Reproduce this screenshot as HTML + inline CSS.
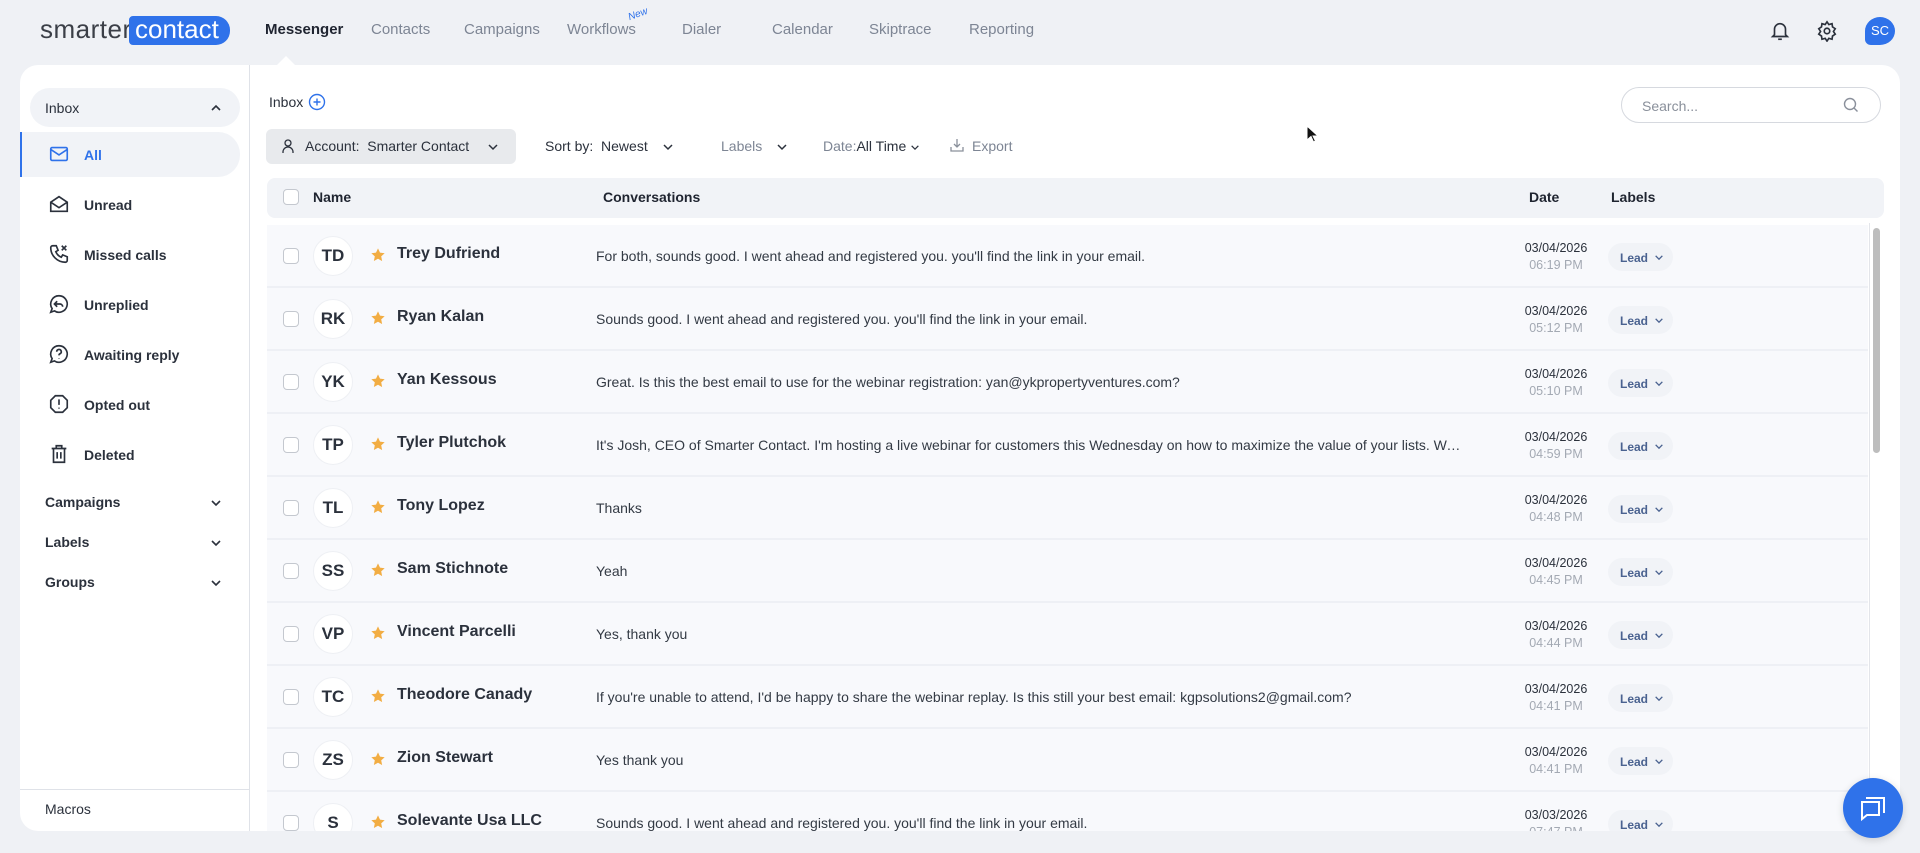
<!DOCTYPE html>
<html><head><meta charset="utf-8"><style>
*{box-sizing:border-box;margin:0;padding:0}
body{width:1920px;height:853px;background:#eff1f5;font-family:"Liberation Sans",Arial,sans-serif;position:relative;overflow:hidden;color:#1f2430}
.abs{position:absolute}
.nav{position:absolute;top:21px;font-size:15px;color:#7d8594}
.panel{position:absolute;left:20px;top:65px;width:1880px;height:766px;background:#fff;border-radius:18px;overflow:hidden}
.side{position:absolute;left:0;top:0;width:230px;height:766px;border-right:1px solid #dfe2e8}
.si{position:absolute;left:64px;font-size:14px;font-weight:bold;color:#2b313c}
.sic{position:absolute;left:28px;width:22px;height:22px}
.sh{position:absolute;left:25px;font-size:14px;font-weight:bold;color:#2b313c}
.chev{position:absolute;left:190px;width:12px;height:8px}
.row{position:absolute;left:247px;width:1601px;height:63px;background:#f8f9fc;border-bottom:2px solid #eef0f5}
.cb{position:absolute;left:16px;top:23px;width:16px;height:16px;border:1.5px solid #c4c8cf;border-radius:4px;background:#fff}
.av{position:absolute;left:46px;top:11px;width:40px;height:40px;border-radius:50%;background:#fff;border:1px solid #eef0f4;font-size:17px;font-weight:bold;color:#2b313c;text-align:center;line-height:38px}
.st{position:absolute;left:103px;top:22px}
.nm{position:absolute;left:130px;top:20px;font-size:16px;font-weight:bold;color:#2b313c}
.cv{position:absolute;left:329px;top:23px;font-size:14px;color:#333a44;white-space:nowrap;width:870px;overflow:hidden;text-overflow:ellipsis}
.dt{position:absolute;left:1239px;top:15px;width:100px;text-align:center;font-size:12.5px;color:#2b313c;line-height:17px}
.dt span{color:#a3a9b3}
.lb{position:absolute;left:1341px;top:18px;width:65px;height:28px;border-radius:14px;background:#f1f3f7;font-size:12px;font-weight:bold;color:#4a6290;padding:8px 0 0 12px}
.lb svg{position:absolute;left:46px;top:11px}
</style></head><body>
<div class="abs" style="left:40px;top:14px;font-size:26px;color:#3b3f47;letter-spacing:0.5px;font-weight:300">smarter</div>
<div class="abs" style="left:129px;top:16px;width:101px;height:29px;background:#2f72ea;border-radius:4px 14px 14px 4px;color:#fff;font-size:26px;line-height:27px;padding-left:6px">contact</div>
<div class="nav" style="left:265px;color:#1f2430;font-weight:bold">Messenger</div>
<div class="abs" style="left:277px;top:56px;width:0;height:0;border-left:9px solid transparent;border-right:9px solid transparent;border-bottom:9px solid #fff"></div>
<div class="nav" style="left:371px">Contacts</div>
<div class="nav" style="left:464px">Campaigns</div>
<div class="nav" style="left:567px">Workflows</div>
<div class="abs" style="left:628px;top:9px;font-size:10px;color:#2f72ea;font-style:italic;transform:rotate(-20deg)">New</div>
<div class="nav" style="left:682px">Dialer</div>
<div class="nav" style="left:772px">Calendar</div>
<div class="nav" style="left:869px">Skiptrace</div>
<div class="nav" style="left:969px">Reporting</div>
<svg class="abs" style="left:1769px;top:20px" width="22" height="22" viewBox="0 0 24 24" fill="none" stroke="#2b313c" stroke-width="1.8"><path d="M6 16V10a6 6 0 0 1 12 0v6l2 2H4z"/><path d="M10 21h4"/></svg>
<svg class="abs" style="left:1816px;top:20px" width="22" height="22" viewBox="0 0 24 24" fill="none" stroke="#2b313c" stroke-width="1.8"><circle cx="12" cy="12" r="3"/><path d="M12 2l2 3 3.5-1 .5 3.5 3 2-2 3 2 3-3 2-.5 3.5-3.5-1-2 3-2-3-3.5 1L6 17.5l-3-2 2-3-2-3 3-2L6.5 4 10 5z"/></svg>
<div class="abs" style="left:1865px;top:17px;width:30px;height:28px;border-radius:50% 50% 50% 20%;background:#2f72ea;color:#fff;font-size:13px;text-align:center;line-height:28px">SC</div>

<div class="panel">
 <div class="side">
  <div class="abs" style="left:10px;top:23px;width:210px;height:39px;border-radius:20px;background:#f1f3f7"></div>
  <div class="sh" style="top:35px;font-weight:normal;color:#2b313c">Inbox</div>
  <svg class="chev" style="top:39px" viewBox="0 0 12 8" fill="none" stroke="#2b313c" stroke-width="1.6"><path d="M2 6l4-4 4 4"/></svg>
  <div class="abs" style="left:0;top:67px;width:220px;height:45px;border-radius:0 22px 22px 0;background:#f1f3f7;border-left:2px solid #2f72ea"></div>
  <svg class="sic" style="top:78px" viewBox="0 0 24 24" fill="none" stroke="#2f72ea" stroke-width="1.8"><rect x="3" y="5" width="18" height="14" rx="1.5"/><path d="M3 7l9 6 9-6"/></svg>
  <div class="si" style="top:82px;color:#2f72ea">All</div>
  <svg class="sic" style="top:128px" viewBox="0 0 24 24" fill="none" stroke="#2b313c" stroke-width="1.8"><path d="M3 10l9-6 9 6v10H3z"/><path d="M3 10l9 6 9-6"/></svg>
  <div class="si" style="top:132px">Unread</div>
  <svg class="sic" style="top:178px" viewBox="0 0 24 24" fill="none" stroke="#2b313c" stroke-width="1.8"><path d="M5 3h4l2 5-2.5 1.5a11 11 0 0 0 6 6L16 13l5 2v4a2 2 0 0 1-2 2A16 16 0 0 1 3 5a2 2 0 0 1 2-2z"/><path d="M15 3l5 5M20 3l-5 5"/></svg>
  <div class="si" style="top:182px">Missed calls</div>
  <svg class="sic" style="top:228px" viewBox="0 0 24 24" fill="none" stroke="#2b313c" stroke-width="1.8"><path d="M12 3a9 9 0 1 1-5 16.5L3 21l1.5-4A9 9 0 0 1 12 3z"/><path d="M10 9l-3 3 3 3M7 12h6a3 3 0 0 1 3 3"/></svg>
  <div class="si" style="top:232px">Unreplied</div>
  <svg class="sic" style="top:278px" viewBox="0 0 24 24" fill="none" stroke="#2b313c" stroke-width="1.8"><path d="M12 3a9 9 0 1 1-5 16.5L3 21l1.5-4A9 9 0 0 1 12 3z"/><path d="M9.5 9.5a2.5 2.5 0 1 1 3.5 2.3c-.7.3-1 .9-1 1.7M12 16.5v.5"/></svg>
  <div class="si" style="top:282px">Awaiting reply</div>
  <svg class="sic" style="top:328px" viewBox="0 0 24 24" fill="none" stroke="#2b313c" stroke-width="1.8"><path d="M8 3h8l5 5v8l-5 5H8l-5-5V8z"/><path d="M12 7v6M12 16v1"/></svg>
  <div class="si" style="top:332px">Opted out</div>
  <svg class="sic" style="top:378px" viewBox="0 0 24 24" fill="none" stroke="#2b313c" stroke-width="1.8"><path d="M4 6h16M9 6V3h6v3M6 6v15h12V6M10 10v7M14 10v7"/></svg>
  <div class="si" style="top:382px">Deleted</div>
  <div class="sh" style="top:429px">Campaigns</div>
  <svg class="chev" style="top:434px" viewBox="0 0 12 8" fill="none" stroke="#2b313c" stroke-width="1.6"><path d="M2 2l4 4 4-4"/></svg>
  <div class="sh" style="top:469px">Labels</div>
  <svg class="chev" style="top:474px" viewBox="0 0 12 8" fill="none" stroke="#2b313c" stroke-width="1.6"><path d="M2 2l4 4 4-4"/></svg>
  <div class="sh" style="top:509px">Groups</div>
  <svg class="chev" style="top:514px" viewBox="0 0 12 8" fill="none" stroke="#2b313c" stroke-width="1.6"><path d="M2 2l4 4 4-4"/></svg>
  <div class="abs" style="left:0;top:724px;width:230px;border-top:1px solid #dfe2e8"></div>
  <div class="abs" style="left:25px;top:736px;font-size:14px;color:#2b313c">Macros</div>
 </div>
 <div class="abs" style="left:249px;top:29px;font-size:14px;color:#2b313c">Inbox</div>
 <svg class="abs" style="left:288px;top:28px" width="18" height="18" viewBox="0 0 18 18" fill="none" stroke="#2f72ea" stroke-width="1.4"><circle cx="9" cy="9" r="7.5"/><path d="M9 5.5v7M5.5 9h7"/></svg>
 <div class="abs" style="left:1601px;top:22px;width:260px;height:36px;border:1px solid #d6d9df;border-radius:18px;padding:10px 0 0 20px;font-size:14px;color:#8a909b">Search...</div>
 <svg class="abs" style="left:1823px;top:32px" width="16" height="16" viewBox="0 0 16 16" fill="none" stroke="#8a909b" stroke-width="1.4"><circle cx="7" cy="7" r="5.5"/><path d="M11 11l3.5 3.5"/></svg>
 <div class="abs" style="left:246px;top:64px;width:250px;height:35px;border-radius:6px;background:#e8eaed"></div>
 <svg class="abs" style="left:260px;top:73px" width="16" height="16" viewBox="0 0 16 16" fill="none" stroke="#2b313c" stroke-width="1.3"><circle cx="8" cy="5" r="3"/><path d="M3 15v-1a5 5 0 0 1 10 0v1"/></svg>
 <div class="abs" style="left:285px;top:73px;font-size:14px;color:#2b313c">Account:&nbsp; Smarter Contact</div>
 <svg class="abs" style="left:467px;top:78px" width="12" height="8" viewBox="0 0 12 8" fill="none" stroke="#2b313c" stroke-width="1.5"><path d="M2 2l4 4 4-4"/></svg>
 <div class="abs" style="left:525px;top:73px;font-size:14px;color:#2b313c">Sort by:&nbsp; Newest</div>
 <svg class="abs" style="left:642px;top:78px" width="12" height="8" viewBox="0 0 12 8" fill="none" stroke="#2b313c" stroke-width="1.5"><path d="M2 2l4 4 4-4"/></svg>
 <div class="abs" style="left:701px;top:73px;font-size:14px;color:#7d8594">Labels</div>
 <svg class="abs" style="left:756px;top:78px" width="12" height="8" viewBox="0 0 12 8" fill="none" stroke="#2b313c" stroke-width="1.5"><path d="M2 2l4 4 4-4"/></svg>
 <div class="abs" style="left:803px;top:73px;font-size:14px;color:#2b313c"><span style="color:#7d8594">Date:</span>All Time</div>
 <svg class="abs" style="left:890px;top:79px" width="10" height="7" viewBox="0 0 12 8" fill="none" stroke="#2b313c" stroke-width="1.5"><path d="M2 2l4 4 4-4"/></svg>
 <svg class="abs" style="left:929px;top:72px" width="16" height="16" viewBox="0 0 16 16" fill="none" stroke="#8a909b" stroke-width="1.3"><path d="M8 2v8M5 7l3 3 3-3M2 10v4h12v-4"/></svg>
 <div class="abs" style="left:952px;top:73px;font-size:14px;color:#7d8594">Export</div>
 <div class="abs" style="left:247px;top:113px;width:1617px;height:40px;border-radius:8px;background:#f1f3f7"></div>
 <div class="abs" style="left:263px;top:124px;width:16px;height:16px;border:1.5px solid #c4c8cf;border-radius:4px;background:#fff"></div>
 <div class="abs" style="left:293px;top:124px;font-size:14px;font-weight:bold">Name</div>
 <div class="abs" style="left:583px;top:124px;font-size:14px;font-weight:bold">Conversations</div>
 <div class="abs" style="left:1509px;top:124px;font-size:14px;font-weight:bold">Date</div>
 <div class="abs" style="left:1591px;top:124px;font-size:14px;font-weight:bold">Labels</div>
 <div class="abs" style="left:1853px;top:163px;width:7px;height:225px;border-radius:4px;background:#bdbdbd"></div>
 <div class="abs" style="left:1849px;top:158px;width:1px;height:610px;background:#e3e5ea"></div>
</div>
<div class="abs" style="left:20px;top:65px;width:1880px;height:766px;overflow:hidden;border-radius:18px;pointer-events:none">
 <div class="row" style="top:160px"><div class="cb"></div><div class="av">TD</div><svg class="st" width="16" height="16" viewBox="0 0 24 24"><path fill="#f2ad43" d="M12 2l3 6.5 7 .8-5.2 4.8 1.4 7L12 17.6 5.8 21l1.4-7L2 9.3l7-.8z"/></svg><div class="nm">Trey Dufriend</div><div class="cv">For both, sounds good. I went ahead and registered you. you'll find the link in your email.</div><div class="dt">03/04/2026<br><span>06:19 PM</span></div><div class="lb">Lead<svg width="10" height="7" viewBox="0 0 12 8" fill="none" stroke="#4a6290" stroke-width="1.6"><path d="M2 2l4 4 4-4"/></svg></div></div>
 <div class="row" style="top:223px"><div class="cb"></div><div class="av">RK</div><svg class="st" width="16" height="16" viewBox="0 0 24 24"><path fill="#f2ad43" d="M12 2l3 6.5 7 .8-5.2 4.8 1.4 7L12 17.6 5.8 21l1.4-7L2 9.3l7-.8z"/></svg><div class="nm">Ryan Kalan</div><div class="cv">Sounds good. I went ahead and registered you. you'll find the link in your email.</div><div class="dt">03/04/2026<br><span>05:12 PM</span></div><div class="lb">Lead<svg width="10" height="7" viewBox="0 0 12 8" fill="none" stroke="#4a6290" stroke-width="1.6"><path d="M2 2l4 4 4-4"/></svg></div></div>
 <div class="row" style="top:286px"><div class="cb"></div><div class="av">YK</div><svg class="st" width="16" height="16" viewBox="0 0 24 24"><path fill="#f2ad43" d="M12 2l3 6.5 7 .8-5.2 4.8 1.4 7L12 17.6 5.8 21l1.4-7L2 9.3l7-.8z"/></svg><div class="nm">Yan Kessous</div><div class="cv">Great. Is this the best email to use for the webinar registration: yan@ykpropertyventures.com?</div><div class="dt">03/04/2026<br><span>05:10 PM</span></div><div class="lb">Lead<svg width="10" height="7" viewBox="0 0 12 8" fill="none" stroke="#4a6290" stroke-width="1.6"><path d="M2 2l4 4 4-4"/></svg></div></div>
 <div class="row" style="top:349px"><div class="cb"></div><div class="av">TP</div><svg class="st" width="16" height="16" viewBox="0 0 24 24"><path fill="#f2ad43" d="M12 2l3 6.5 7 .8-5.2 4.8 1.4 7L12 17.6 5.8 21l1.4-7L2 9.3l7-.8z"/></svg><div class="nm">Tyler Plutchok</div><div class="cv">It's Josh, CEO of Smarter Contact. I'm hosting a live webinar for customers this Wednesday on how to maximize the value of your lists. Want to join?</div><div class="dt">03/04/2026<br><span>04:59 PM</span></div><div class="lb">Lead<svg width="10" height="7" viewBox="0 0 12 8" fill="none" stroke="#4a6290" stroke-width="1.6"><path d="M2 2l4 4 4-4"/></svg></div></div>
 <div class="row" style="top:412px"><div class="cb"></div><div class="av">TL</div><svg class="st" width="16" height="16" viewBox="0 0 24 24"><path fill="#f2ad43" d="M12 2l3 6.5 7 .8-5.2 4.8 1.4 7L12 17.6 5.8 21l1.4-7L2 9.3l7-.8z"/></svg><div class="nm">Tony Lopez</div><div class="cv">Thanks</div><div class="dt">03/04/2026<br><span>04:48 PM</span></div><div class="lb">Lead<svg width="10" height="7" viewBox="0 0 12 8" fill="none" stroke="#4a6290" stroke-width="1.6"><path d="M2 2l4 4 4-4"/></svg></div></div>
 <div class="row" style="top:475px"><div class="cb"></div><div class="av">SS</div><svg class="st" width="16" height="16" viewBox="0 0 24 24"><path fill="#f2ad43" d="M12 2l3 6.5 7 .8-5.2 4.8 1.4 7L12 17.6 5.8 21l1.4-7L2 9.3l7-.8z"/></svg><div class="nm">Sam Stichnote</div><div class="cv">Yeah</div><div class="dt">03/04/2026<br><span>04:45 PM</span></div><div class="lb">Lead<svg width="10" height="7" viewBox="0 0 12 8" fill="none" stroke="#4a6290" stroke-width="1.6"><path d="M2 2l4 4 4-4"/></svg></div></div>
 <div class="row" style="top:538px"><div class="cb"></div><div class="av">VP</div><svg class="st" width="16" height="16" viewBox="0 0 24 24"><path fill="#f2ad43" d="M12 2l3 6.5 7 .8-5.2 4.8 1.4 7L12 17.6 5.8 21l1.4-7L2 9.3l7-.8z"/></svg><div class="nm">Vincent Parcelli</div><div class="cv">Yes, thank you</div><div class="dt">03/04/2026<br><span>04:44 PM</span></div><div class="lb">Lead<svg width="10" height="7" viewBox="0 0 12 8" fill="none" stroke="#4a6290" stroke-width="1.6"><path d="M2 2l4 4 4-4"/></svg></div></div>
 <div class="row" style="top:601px"><div class="cb"></div><div class="av">TC</div><svg class="st" width="16" height="16" viewBox="0 0 24 24"><path fill="#f2ad43" d="M12 2l3 6.5 7 .8-5.2 4.8 1.4 7L12 17.6 5.8 21l1.4-7L2 9.3l7-.8z"/></svg><div class="nm">Theodore Canady</div><div class="cv">If you're unable to attend, I'd be happy to share the webinar replay. Is this still your best email: kgpsolutions2@gmail.com?</div><div class="dt">03/04/2026<br><span>04:41 PM</span></div><div class="lb">Lead<svg width="10" height="7" viewBox="0 0 12 8" fill="none" stroke="#4a6290" stroke-width="1.6"><path d="M2 2l4 4 4-4"/></svg></div></div>
 <div class="row" style="top:664px"><div class="cb"></div><div class="av">ZS</div><svg class="st" width="16" height="16" viewBox="0 0 24 24"><path fill="#f2ad43" d="M12 2l3 6.5 7 .8-5.2 4.8 1.4 7L12 17.6 5.8 21l1.4-7L2 9.3l7-.8z"/></svg><div class="nm">Zion Stewart</div><div class="cv">Yes thank you</div><div class="dt">03/04/2026<br><span>04:41 PM</span></div><div class="lb">Lead<svg width="10" height="7" viewBox="0 0 12 8" fill="none" stroke="#4a6290" stroke-width="1.6"><path d="M2 2l4 4 4-4"/></svg></div></div>
 <div class="row" style="top:727px"><div class="cb"></div><div class="av">S</div><svg class="st" width="16" height="16" viewBox="0 0 24 24"><path fill="#f2ad43" d="M12 2l3 6.5 7 .8-5.2 4.8 1.4 7L12 17.6 5.8 21l1.4-7L2 9.3l7-.8z"/></svg><div class="nm">Solevante Usa LLC</div><div class="cv">Sounds good. I went ahead and registered you. you'll find the link in your email.</div><div class="dt">03/03/2026<br><span>07:47 PM</span></div><div class="lb">Lead<svg width="10" height="7" viewBox="0 0 12 8" fill="none" stroke="#4a6290" stroke-width="1.6"><path d="M2 2l4 4 4-4"/></svg></div></div>
</div>
<div class="abs" style="left:1843px;top:778px;width:60px;height:60px;border-radius:50%;background:#2f72ea;box-shadow:0 2px 8px rgba(0,0,0,.15)"></div>
<svg class="abs" style="left:1859px;top:795px" width="28" height="28" viewBox="0 0 28 28" fill="none" stroke="#fff" stroke-width="2"><path d="M3 7h17v13H8l-5 4z"/><path d="M7 3h18v15"/></svg>
<svg class="abs" style="left:1306px;top:125px" width="14" height="18" viewBox="0 0 14 18"><path d="M1 1v14l4-3.5 2.5 5.5 2-1-2.5-5h5z" fill="#111" stroke="#fff" stroke-width="1"/></svg>
</body></html>
